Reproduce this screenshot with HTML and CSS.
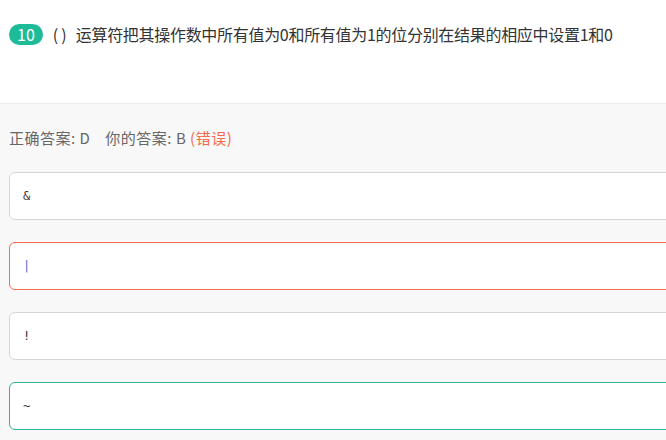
FILE: index.html
```html
<!DOCTYPE html>
<html lang="zh-CN">
<head>
<meta charset="utf-8">
<title>题目 10</title>
<link rel="stylesheet" href="styles.css">
</head>
<body>
<div class="top">
  <div class="question">
    <span class="badge">10</span>
    <span class="qtext"><span class="paren">(&thinsp;)</span>运算符把其操作数中所有值为0和所有值为1的位分别在结果的相应中设置1和0</span>
  </div>
</div>
<div class="bottom">
  <div class="answer">正确答案: D<span class="sp"></span>你的答案: B <span class="wrong">(错误)</span></div>
  <div class="options">
    <div class="opt">&amp;</div>
    <div class="opt opt-wrong"><span class="bar">|</span></div>
    <div class="opt">!</div>
    <div class="opt opt-right">~</div>
  </div>
</div>
</body>
</html>
```
FILE: styles.css
```css
html, body {
  margin: 0;
  padding: 0;
}
body {
  width: 666px;
  height: 440px;
  overflow: hidden;
  background: #f8f8f8;
  font-family: "Noto Sans CJK SC", "Noto Sans", sans-serif;
}
.top {
  background: #fff;
  height: 104px;
  box-sizing: border-box;
  padding: 24px 9px 0;
  border-bottom: 1px solid #ebebeb;
}
.question {
  display: flex;
  align-items: center;
}
.badge {
  display: inline-block;
  height: 21px;
  line-height: 21px;
  padding: 0 8px;
  min-width: 17px;
  text-align: center;
  border-radius: 11px;
  background: #1dbb98;
  color: #fff;
  font-size: 16px;
}
.qtext {
  margin-left: 10px;
  font-size: 16px;
  color: #333;
  line-height: 21px;
  white-space: nowrap;
  letter-spacing: -0.3px;
}
.paren {
  display: inline-block;
  width: 23px;
  letter-spacing: 0;
}
.bottom {
  background: #f8f8f8;
  padding: 22px 0 0 9px;
}
.answer {
  font-size: 15px;
  line-height: 24px;
  color: #666;
  white-space: nowrap;
  letter-spacing: 0.5px;
}
.sp {
  display: inline-block;
  width: 15px;
}
.wrong {
  color: #f56a4c;
}
.options {
  margin-top: 22px;
  width: 720px;
  display: flex;
  flex-direction: column;
  gap: 22px;
}
.opt {
  height: 46px;
  border: 1px solid #d6d6d6;
  border-radius: 6px;
  background: #fff;
  padding-left: 13px;
  display: flex;
  align-items: center;
  font-family: "DejaVu Sans Mono", monospace;
  font-size: 12px;
  color: #333;
}
.opt-wrong {
  border-color: #f96a4a;
}
.opt-right {
  border-color: #2cb894;
}
.bar {
  color: #3f6fcf;
}
```
